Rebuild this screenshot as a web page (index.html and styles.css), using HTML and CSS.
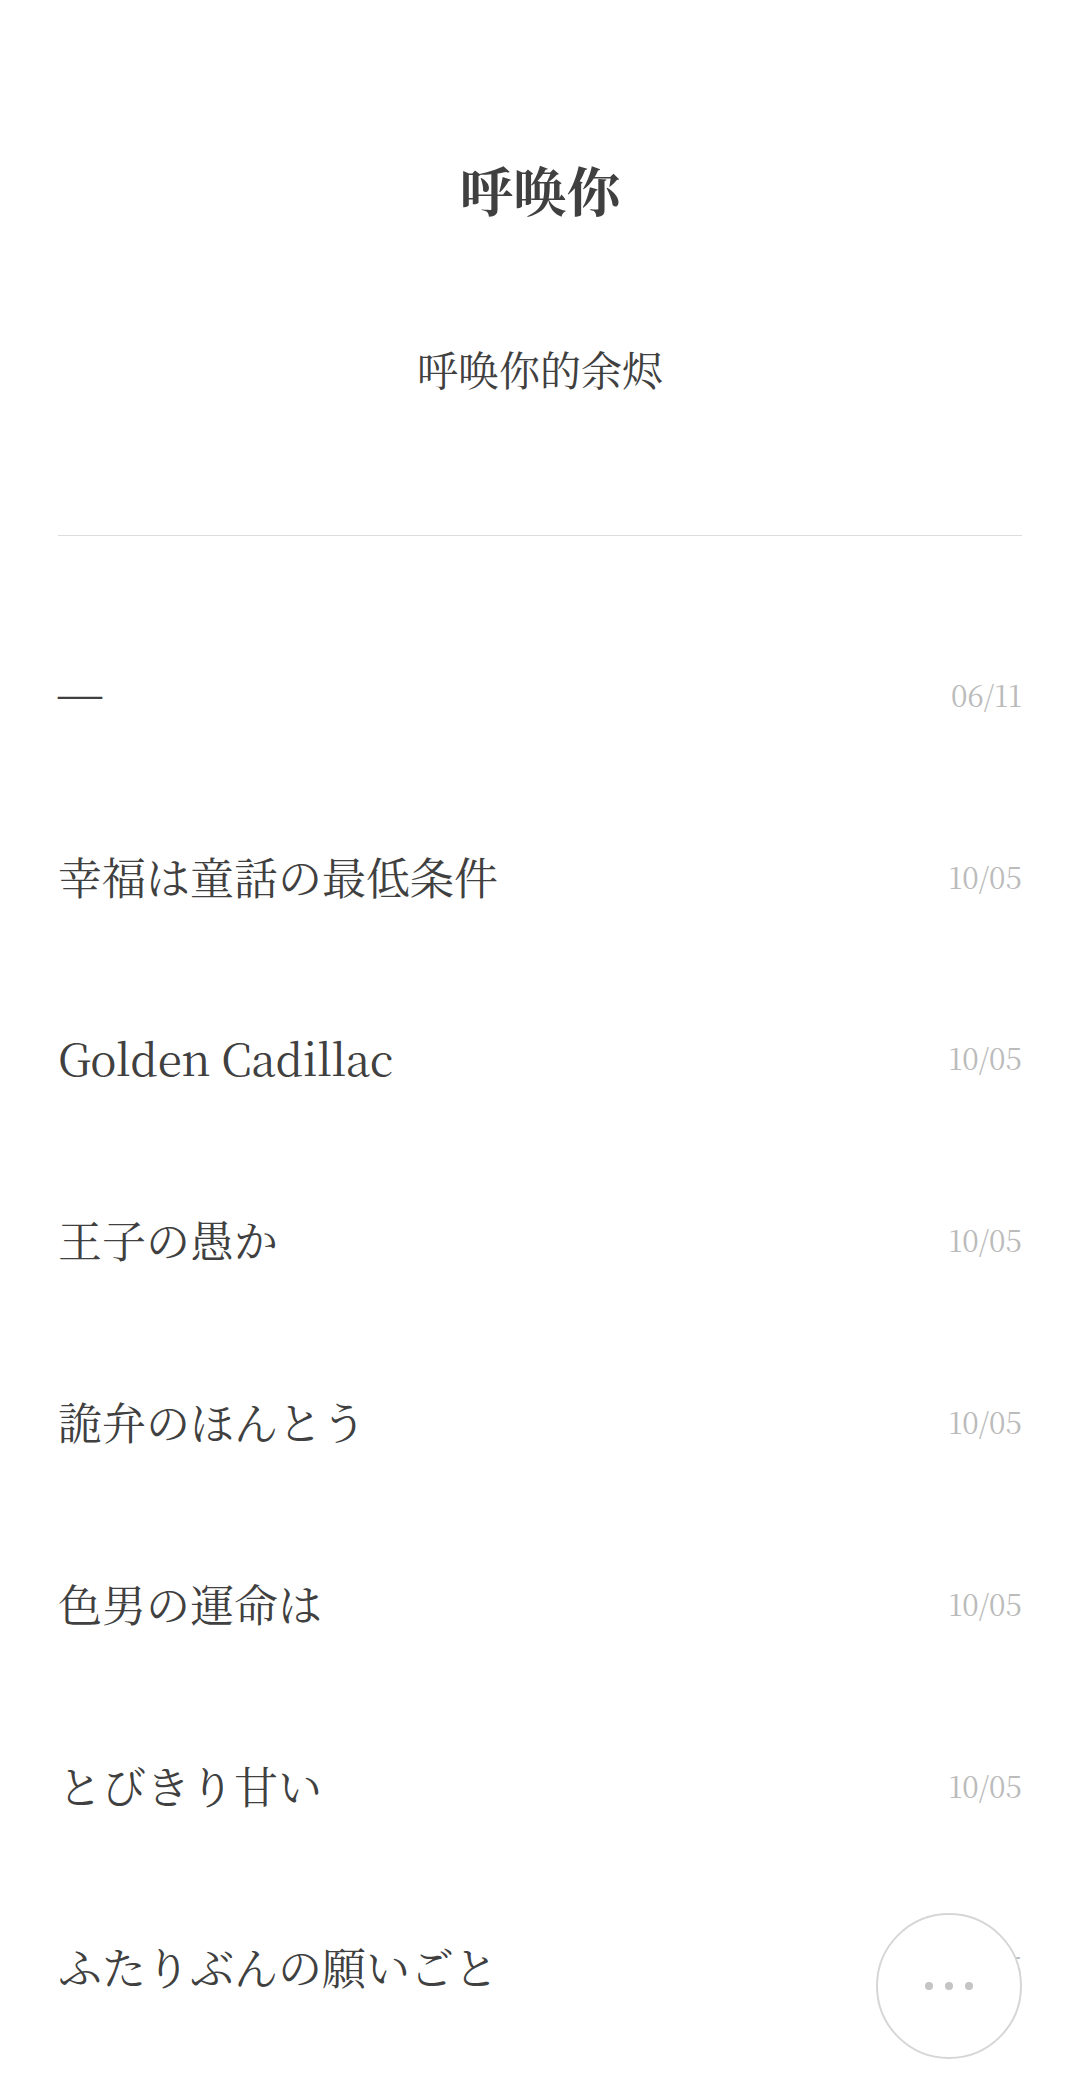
FILE: index.html
```html
<!DOCTYPE html>
<html lang="zh-CN">
<head>
    <meta charset="UTF-8">
    <meta name="viewport" content="width=device-width, initial-scale=1.0">
    <title>呼唤你</title>
    <link rel="stylesheet" href="styles.css">
</head>
<body>
    <!-- 页头 -->
    <header class="site-header">
        <h1 class="site-title">呼唤你</h1>
        <p class="site-subtitle">呼唤你的余烬</p>
    </header>

    <!-- 文章列表 -->
    <ul class="post-list">
        <li class="post-row"><span class="post-title post-title-dash">—</span><span class="post-date">06/11</span></li>
        <li class="post-row"><span class="post-title" lang="ja">幸福は童話の最低条件</span><span class="post-date">10/05</span></li>
        <li class="post-row"><span class="post-title post-title-latin">Golden Cadillac</span><span class="post-date">10/05</span></li>
        <li class="post-row"><span class="post-title" lang="ja">王子の愚か</span><span class="post-date">10/05</span></li>
        <li class="post-row"><span class="post-title" lang="ja">詭弁のほんとう</span><span class="post-date">10/05</span></li>
        <li class="post-row"><span class="post-title" lang="ja">色男の運命は</span><span class="post-date">10/05</span></li>
        <li class="post-row"><span class="post-title" lang="ja">とびきり甘い</span><span class="post-date">10/05</span></li>
        <li class="post-row"><span class="post-title" lang="ja">ふたりぶんの願いごと</span><span class="post-date">10/05</span></li>
    </ul>

    <!-- 悬浮菜单按钮 -->
    <div class="menu-button">
        <span class="menu-dot"></span>
        <span class="menu-dot"></span>
        <span class="menu-dot"></span>
    </div>
</body>
</html>
```

FILE: styles.css
```css
/* 全局样式 */
* {
    margin: 0;
    padding: 0;
    box-sizing: border-box;
}

html, body {
    height: 2086px;
    overflow: hidden;
}

body {
    font-family: "Noto Serif CJK JP", "Noto Serif CJK SC", "Liberation Serif", "Noto Sans CJK JP", serif;
    background: #fff;
    color: #404040;
    padding: 0 58px;
}

/* 页头 */
.site-header {
    height: 536px;
    padding-top: 153px;
    border-bottom: 1px solid #ddd;
    text-align: center;
}

.site-title {
    font-size: 53.5px;
    line-height: 72px;
    font-weight: 700;
}

.site-subtitle {
    margin-top: 112px;
    font-size: 41px;
    line-height: 64px;
}

/* 文章列表 */
.post-list {
    list-style: none;
    padding-top: 67px;
}

.post-row {
    height: 181.8px;
    display: flex;
    align-items: center;
    justify-content: space-between;
}

.post-title {
    font-size: 44px;
}

.post-title-dash {
    font-family: "Liberation Serif", serif;
}

.post-title-latin {
    letter-spacing: -0.3px;
}

.post-date {
    font-size: 29.5px;
    color: #bbb;
}

/* 悬浮菜单按钮 */
.menu-button {
    position: fixed;
    left: 876px;
    top: 1913px;
    width: 146px;
    height: 146px;
    border: 2px solid #d6d6d6;
    border-radius: 50%;
    background: #fff;
    display: flex;
    align-items: center;
    justify-content: center;
    gap: 12px;
}

.menu-dot {
    width: 8px;
    height: 8px;
    border-radius: 50%;
    background: #c4c4c4;
}
```
